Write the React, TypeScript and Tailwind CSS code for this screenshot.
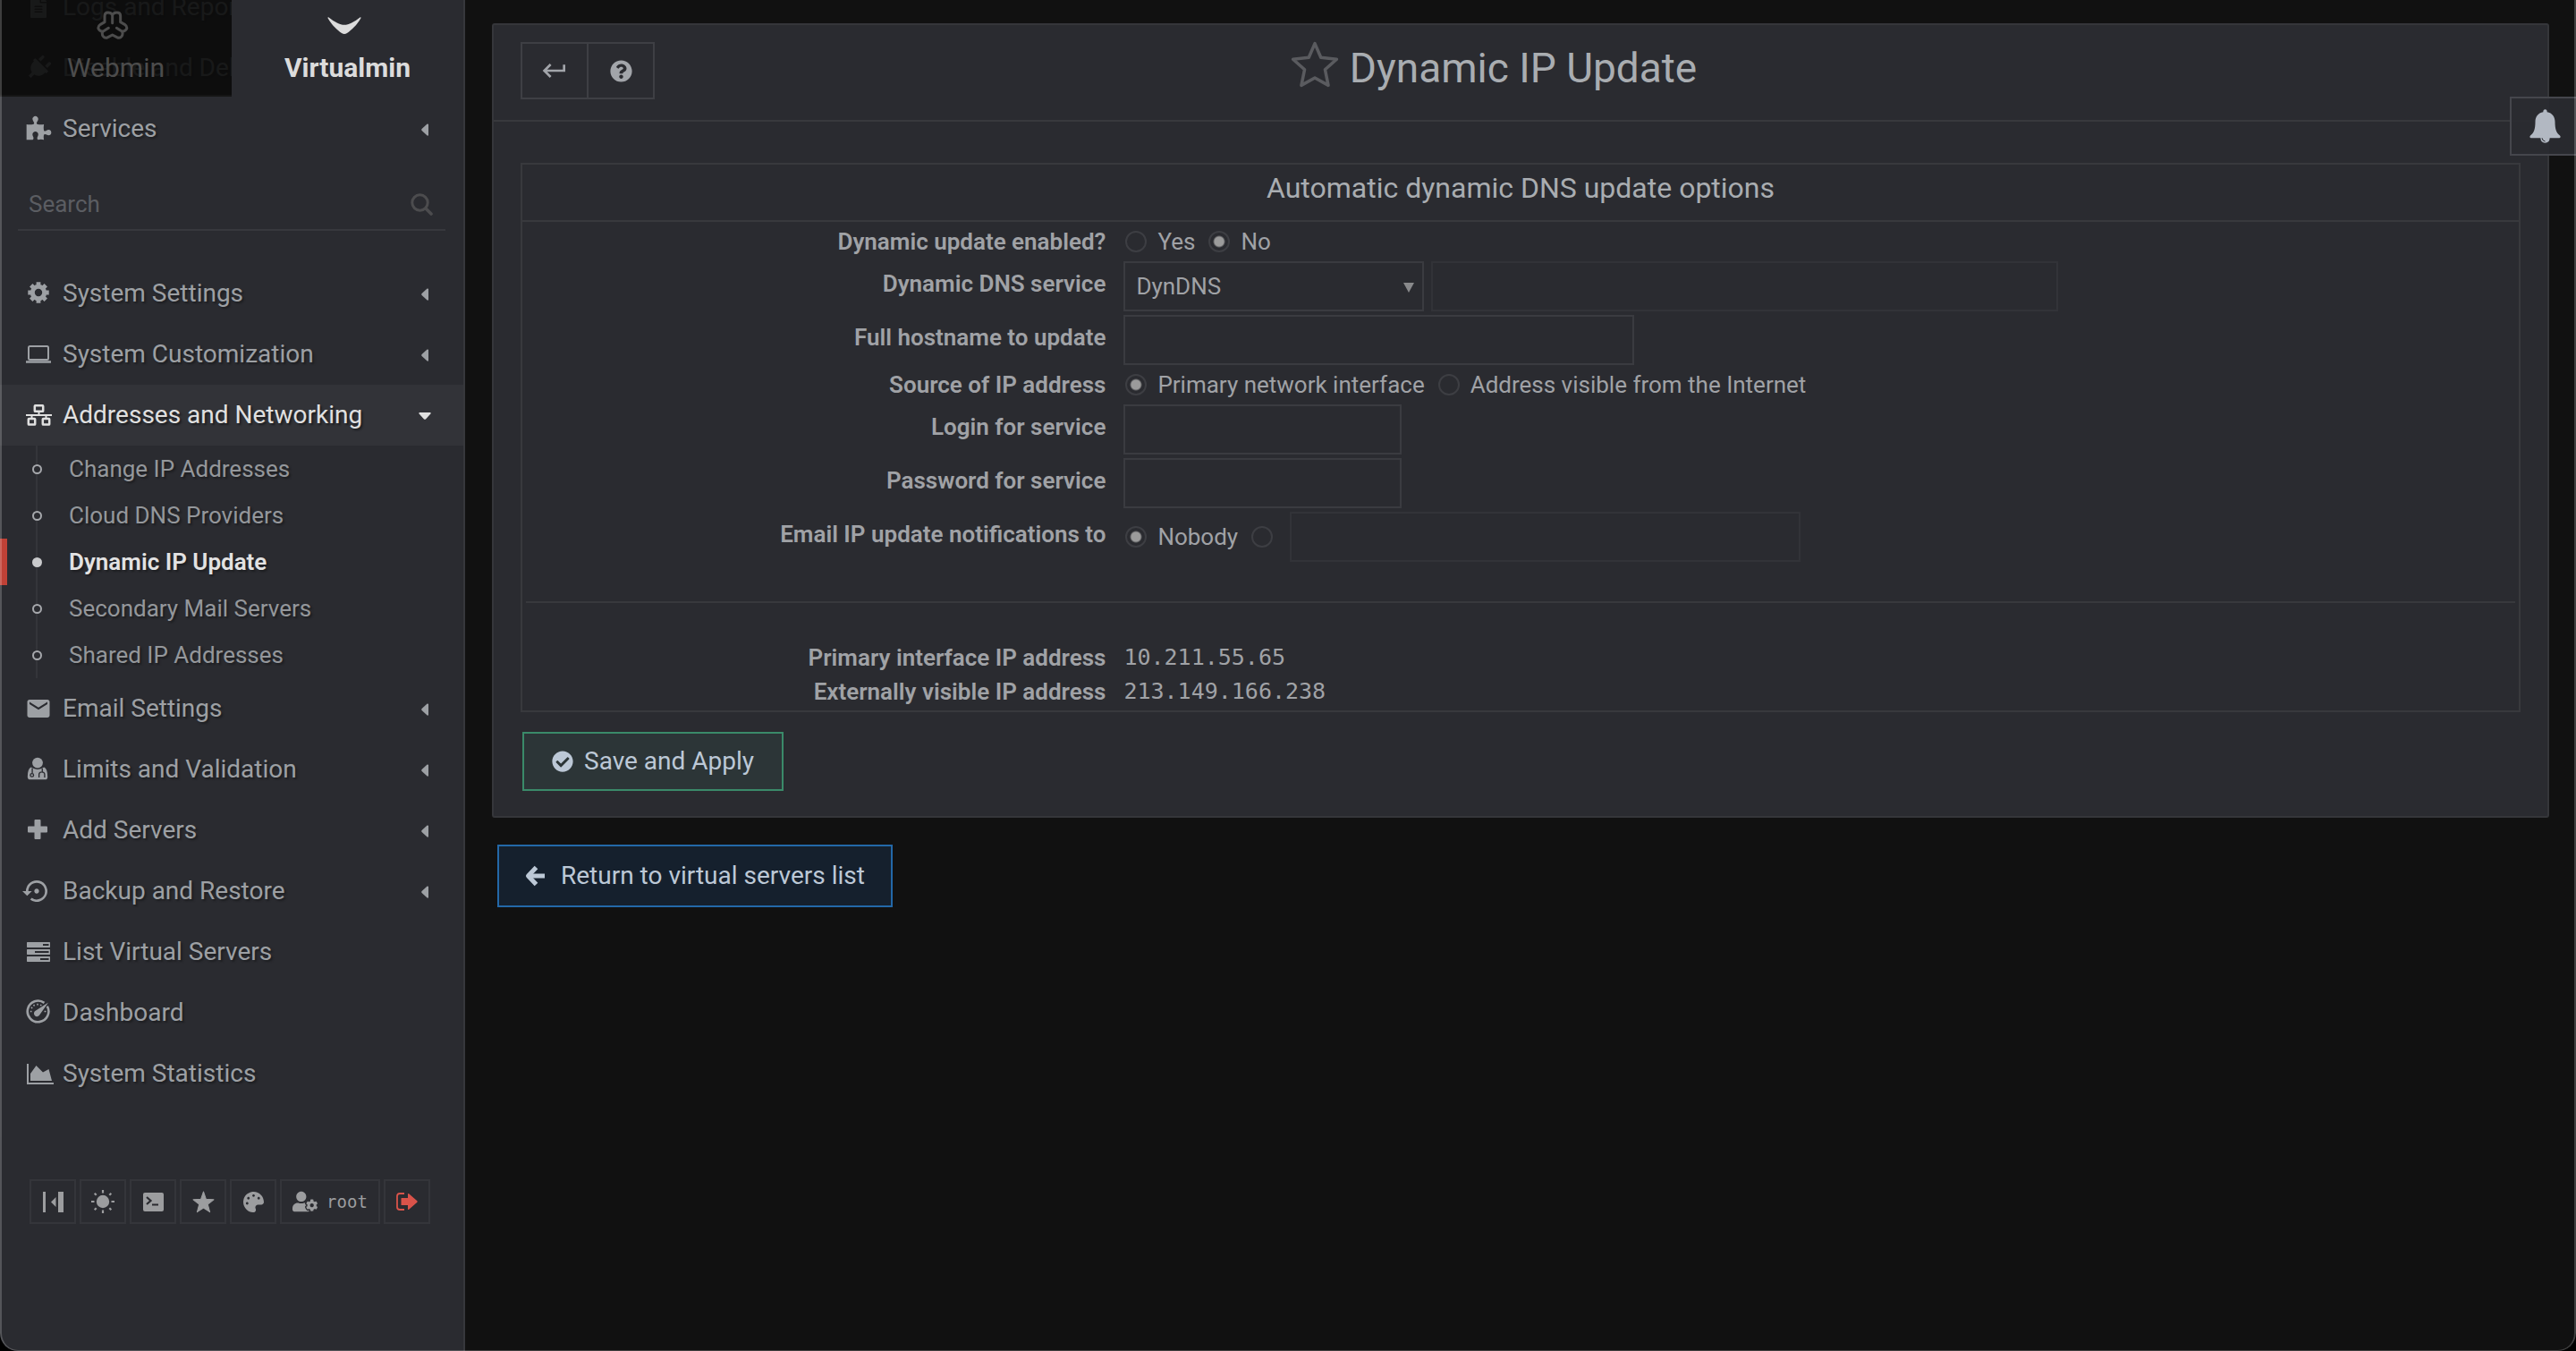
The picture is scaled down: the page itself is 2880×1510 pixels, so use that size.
import type { ReactNode } from "react";
import {
  FaCheckCircle,
  FaFileAlt,
  FaPalette,
  FaPlug,
  FaQuestionCircle,
  FaUserCog,
} from "react-icons/fa";
import { MdEmail, MdKeyboardReturn, MdSettingsBackupRestore } from "react-icons/md";

function WebminLogo() {
  return (
    <svg className="h-[33px] w-[36px]" viewBox="318 33 108 99" fill="none" stroke="currentColor" strokeWidth="9" strokeLinecap="round" strokeLinejoin="round">
      <path d="M345 71V50Q345 39 357 39Q366 39 371 46Q376 39 386 39Q398 39 398 50V71L412 79Q421 85 419 93Q416 101 404 103Q407 112 402 119Q396 127 386 122L371 114L356 122Q346 127 340 119Q335 112 338 103Q327 101 324 93Q322 85 331 79Z" />
      <path d="M371 48V74M358 91L339 103M385 91L404 103" />
    </svg>
  );
}

function VirtualminLogo() {
  return (
    <svg className="h-[33px] w-[38px]" viewBox="0 0 38 33" fill="currentColor">
      <path d="M.5 7.500Q1 7 1.600 7.400C8 12.500 14 15.500 19 15.800C24 15.500 30 12.500 36.400 7.400Q37 7 37.500 7.500Q37.700 8 37.300 8.600C33 16 27 22 22 25Q19 27 16 25C11 22 5 16 .7 8.600Q.3 8 .5 7.500Z" />
    </svg>
  );
}

function PuzzleIcon() {
  return (
    <svg className="h-[28px] w-[29px] -translate-y-px" viewBox="85 379 88 84" fill="currentColor">
      <path d="M87 409Q100 411 111 408Q115 405 110 398Q105 390 109 385Q117 377 125 385Q129 391 124 398Q119 405 123 408Q134 411 146 409Q144 421 146 430Q149 434 155 429Q163 424 169 430Q173 437 169 443Q163 449 155 444Q149 440 146 444Q144 452 146 461Q136 459 126 461Q121 457 125 450Q129 441 124 436Q117 430 110 436Q105 441 109 450Q113 457 108 461H87Z" />
    </svg>
  );
}

function DoctorIcon() {
  return (
    <svg className="h-[26px] w-[24px] -translate-x-px -translate-y-px" viewBox="85 256 72 79" fill="currentColor">
      <circle cx="121" cy="276" r="18" />
      <path d="M99 291Q87 296 87 324Q88 333 96 333H146Q155 333 155 324Q155 296 143 291Q121 306 99 291Z" />
      <g fill="none" stroke="#2a2b30" strokeWidth="4">
        <path d="M103 294V311M137 295V306M126 326V316Q126 307 135 307Q145 307 145 316V326" />
        <circle cx="102" cy="318" r="5.500" />
      </g>
    </svg>
  );
}

function PlusIcon() {
  return (
    <svg className="h-[22px] w-[22px] -translate-x-px -translate-y-px" viewBox="0 0 22 22" fill="currentColor">
      <path d="M8.500 0H13.500Q14.500 0 14.500 1V7.500H21Q22 7.500 22 8.500V13.500Q22 14.500 21 14.500H14.500V21Q14.500 22 13.500 22H8.500Q7.500 22 7.500 21V14.500H1Q0 14.500 0 13.500V8.500Q0 7.500 1 7.500H7.500V1Q7.500 0 8.500 0Z" />
    </svg>
  );
}

function GearIcon() {
  const angles = [0, 45, 90, 135];
  return (
    <svg className="h-[24px] w-[24px] -translate-y-px" viewBox="0 0 24 24" fill="none" stroke="currentColor">
      <circle cx="12" cy="12" r="6.700" strokeWidth="5" />
      {angles.map((a) => (
        <g key={a} transform={`rotate(${a} 12 12)`}>
          <path d="M12 0.300V5M12 19V23.700" strokeWidth="4.800" />
        </g>
      ))}
    </svg>
  );
}

function LaptopIcon() {
  return (
    <svg className="h-[20px] w-[28px]" viewBox="0 0 28 20" fill="none" stroke="currentColor">
      <rect x="3" y="1" width="22" height="15" rx="1.500" strokeWidth="2" />
      <path d="M0 18.500H28" strokeWidth="2.500" />
    </svg>
  );
}

function NetworkIcon() {
  return (
    <svg className="h-[24px] w-[29px]" viewBox="0 0 29 24" fill="none" stroke="currentColor">
      <rect x="9.800" y="1.300" width="9.400" height="6.500" rx="0.600" strokeWidth="2.500" />
      <rect x="2.800" y="16" width="7.400" height="6.500" rx="0.600" strokeWidth="2.500" />
      <rect x="18.800" y="16" width="7.400" height="6.500" rx="0.600" strokeWidth="2.500" />
      <path d="M0 12H29M14.500 8V12M6.500 12V16M22.500 12V16" strokeWidth="2" />
    </svg>
  );
}

function ServersIcon() {
  return (
    <svg className="h-[22px] w-[26px]" viewBox="0 0 26 22" fill="currentColor" fillRule="evenodd">
      <path d="M0.500 0H25.500L26 .5V5.500L25.500 6H0.500L0 5.500V.5ZM18 2V4H24.500V2Z" />
      <path d="M0.500 8H25.500L26 8.500V13.500L25.500 14H0.500L0 13.500V8.500ZM9 10V12H24.500V10Z" />
      <path d="M0.500 16H25.500L26 16.500V21.500L25.500 22H0.500L0 21.500V16.500ZM15 18V20H24.500V18Z" />
    </svg>
  );
}

function GaugeIcon() {
  return (
    <svg className="h-[27px] w-[27px] -translate-x-px -translate-y-[2px]" viewBox="0 0 27 27" fill="none" stroke="currentColor">
      <path d="M20.500 3.900A11.800 11.800 0 1 0 23.800 7.600" strokeWidth="2.600" />
      <path d="M25 3.500L15.500 17A3.400 3.400 0 1 1 11 12.600L25 3.500Z" fill="currentColor" stroke="none" />
      <path d="M13 4.800V6.600M8.700 5.900L9.400 7.500M5.800 9L7.300 9.900M4.800 13.500H6.500M20.500 13.500H22.500M17 5.800L16.400 7.200" strokeWidth="1.600" />
    </svg>
  );
}

function AreaChartIcon() {
  return (
    <svg className="h-[23px] w-[30px] translate-x-[2px]" viewBox="0 0 30 23" fill="currentColor">
      <path d="M0 0H2V21H30V23H0Z" />
      <path d="M4 19V11L10.500 2L18 9.500L24.500 6L28 19Z" />
    </svg>
  );
}

function SearchIcon() {
  return (
    <svg className="h-[25px] w-[25px] shrink-0 text-[#4c4c4e]" viewBox="0 0 25 25" fill="none" stroke="currentColor" strokeWidth="3" strokeLinecap="round">
      <circle cx="10.500" cy="10.500" r="8.700" />
      <path d="M17 17L23 23" strokeWidth="3.600" />
    </svg>
  );
}

function Caret({ open = false }: { open?: boolean }) {
  return open ? (
    <svg className="h-[8px] w-[14px]" viewBox="0 0 14 8" fill="currentColor">
      <path d="M1 0H13Q14 .4 13.400 1.400L8 7.400Q7 8.200 6 7.400L.6 1.400Q0 .4 1 0Z" />
    </svg>
  ) : (
    <svg className="h-[14px] w-[8px]" viewBox="0 0 8 14" fill="currentColor">
      <path d="M8 1V13Q7.600 14 6.600 13.400L.6 8Q-.2 7 .6 6L6.600 .6Q7.600 0 8 1Z" />
    </svg>
  );
}

function CollapseIcon() {
  return (
    <svg className="h-[23px] w-[23px]" viewBox="0 0 23 23" fill="currentColor">
      <path d="M0 0H3V23H0ZM17 0H23V23H17ZM14.500 6V17L9 11.500Z" />
    </svg>
  );
}

function SunIcon() {
  return (
    <svg className="h-[26px] w-[26px]" viewBox="0 0 26 26" fill="currentColor">
      <circle cx="13" cy="13" r="7.200" />
      <path d="M13 0V3.500M13 22.500V26M0 13H3.500M22.500 13H26M3.700 3.700L5.700 5.700M20.300 20.300L22.300 22.300M22.300 3.700L20.300 5.700M5.700 20.300L3.700 22.300" stroke="currentColor" strokeWidth="2.200" />
    </svg>
  );
}

function TerminalIcon() {
  return (
    <svg className="h-[21px] w-[23px]" viewBox="0 0 23 21">
      <rect width="23" height="21" rx="2" fill="currentColor" />
      <path d="M4 5L8.500 9L4 13M10 13.500H17" fill="none" stroke="#2a2b30" strokeWidth="2.200" />
    </svg>
  );
}

function StarIcon() {
  return (
    <svg className="h-[25px] w-[25px]" viewBox="0 0 24 24" fill="currentColor" stroke="currentColor" strokeLinejoin="round">
      <path d="M12 1L14.800 9L23 9.400L16.600 14.500L18.800 22.700L12 18.200L5.200 22.700L7.400 14.500L1 9.400L9.200 9Z" />
    </svg>
  );
}

function StarOutlineIcon() {
  return (
    <svg className="h-[54px] w-[54px]" viewBox="0 0 52 52" fill="none" stroke="currentColor" strokeWidth="3.400" strokeLinejoin="round">
      <path d="M26 3.500L32.500 18.600L49.500 20.500L37 31.500L40.500 48.500L26 40.500L11.500 48.500L15 31.500L2.500 20.500L19.500 18.600Z" />
    </svg>
  );
}

function LogoutIcon() {
  return (
    <svg className="h-[20px] w-[24px]" viewBox="0 0 24 20" fill="currentColor">
      <path d="M9 1H4Q1 1 1 4V16Q1 19 4 19H9" fill="none" stroke="currentColor" strokeWidth="1.800" />
      <path d="M6 6H13V1.500Q13.300 .5 14.200 1.200L23.400 9.300Q24 10 23.400 10.700L14.200 18.800Q13.300 19.500 13 18.500V14H6Q5.500 14 5.500 13.500V6.500Q5.500 6 6 6Z" />
    </svg>
  );
}

function ArrowLeftIcon() {
  return (
    <svg className="h-[24px] w-[22px]" viewBox="0 0 22 24" fill="none" stroke="currentColor" strokeWidth="5" strokeLinejoin="round">
      <path d="M12.500 2.500L3.500 12L12.500 21.500" />
      <path d="M4 12H22" />
    </svg>
  );
}

function BellIcon() {
  return (
    <svg className="h-[38px] w-[35px]" viewBox="0 0 35 38" fill="currentColor">
      <path d="M15.300 3.200Q15.300 .3 17.500 .3Q19.700 .3 19.700 3.200C25.500 4.200 28.500 8.500 28.500 14C28.500 22 30 26.500 34 29.600Q35.500 31.300 33.500 32.300H22.700Q22.300 37.700 17.500 37.700Q12.700 37.700 12.300 32.300H1.500Q-.5 31.300 1 29.600C5 26.500 6.500 22 6.500 14C6.500 8.500 9.500 4.200 15.300 3.200Z" />
      <path d="M14 32.300Q14.500 35.500 17.500 36" fill="none" stroke="#2a2b30" strokeWidth="1" />
    </svg>
  );
}

type Item = { label: string; icon: ReactNode; menu?: boolean; active?: boolean };

const above: Item[] = [
  { label: "Logs and Reports", icon: <FaFileAlt className="size-6" />, menu: true },
  { label: "Disable and Delete", icon: <FaPlug className="size-7 rotate-45" />, menu: true },
  { label: "Services", icon: <PuzzleIcon />, menu: true },
];

const upper: Item[] = [
  { label: "System Settings", icon: <GearIcon />, menu: true },
  { label: "System Customization", icon: <LaptopIcon />, menu: true },
  { label: "Addresses and Networking", icon: <NetworkIcon />, menu: true, active: true },
];

const subItems = [
  "Change IP Addresses",
  "Cloud DNS Providers",
  "Dynamic IP Update",
  "Secondary Mail Servers",
  "Shared IP Addresses",
];

const lower: Item[] = [
  { label: "Email Settings", icon: <MdEmail className="size-[30px]" />, menu: true },
  { label: "Limits and Validation", icon: <DoctorIcon />, menu: true },
  { label: "Add Servers", icon: <PlusIcon />, menu: true },
  { label: "Backup and Restore", icon: <MdSettingsBackupRestore className="size-[32px] shrink-0 -translate-x-[2px]" />, menu: true },
  { label: "List Virtual Servers", icon: <ServersIcon /> },
  { label: "Dashboard", icon: <GaugeIcon /> },
  { label: "System Statistics", icon: <AreaChartIcon /> },
];

function MenuRow({ item }: { item: Item }) {
  return (
    <li>
      <a
        href="#"
        className={
          item.active
            ? "flex h-[68px] items-center bg-[#323338] pr-[35px] pl-7 text-[28px] text-[#e0e0e0]"
            : "flex h-[68px] items-center pr-[35px] pl-7 text-[28px] text-[#9da0a4]"
        }
      >
        <span className="mr-3 flex w-[30px] justify-center">{item.icon}</span>
        <span className="flex-1 whitespace-nowrap">{item.label}</span>
        {item.menu && (
          <span className="flex w-4 justify-center pt-[2px]">
            <Caret open={item.active} />
          </span>
        )}
      </a>
    </li>
  );
}

function Sidebar() {
  const tool = "flex h-[50px] w-[52px] items-center justify-center border-2 border-[#34353a]";
  return (
    <aside className="relative w-[520px] shrink-0 overflow-hidden border-r-2 border-[#37383c] bg-[#2a2b30] [text-shadow:2px_2px_2px_#1d1e21]">
      <ul className="-mt-[26px]">
        {above.map((i) => (
          <MenuRow key={i.label} item={i} />
        ))}
      </ul>

      <div className="absolute inset-x-0 top-0 grid h-[108px] grid-cols-2 text-[30px] leading-9 [text-shadow:none]">
        <a href="#" className="flex flex-col items-center gap-[13px] border-b-2 border-[#151515] bg-[#0a0a0a]/90 pt-3 text-[#4c4c4c]">
          <span className="mr-2"><WebminLogo /></span>
          Webmin
        </a>
        <a href="#" className="flex flex-col items-center gap-[13px] bg-[#2a2b30] pt-3 font-bold text-[#dcdcdc]">
          <span className="mr-2"><VirtualminLogo /></span>
          Virtualmin
        </a>
      </div>

      <label className="mx-5 mt-[22px] mb-9 flex h-[58px] items-center border-b-2 border-[#37383d] pr-[14px] pl-3">
        <input
          type="search"
          aria-label="Search"
          placeholder="Search"
          className="min-w-0 flex-1 bg-transparent text-[26px] outline-none placeholder:text-[#5b5d62]"
        />
        <SearchIcon />
      </label>

      <ul>
        {upper.map((i) => (
          <MenuRow key={i.label} item={i} />
        ))}
      </ul>
      <ul className="relative before:absolute before:inset-y-0 before:left-[40px] before:w-[2px] before:bg-[#34353a]">
        {subItems.map((label) => {
          const current = label === "Dynamic IP Update";
          return (
            <li key={label}>
              <a
                href="#"
                className={
                  current
                    ? "relative flex h-[52px] items-center border-l-8 border-[#bf4136] pl-7 text-[26px] font-semibold text-[#e2e2e2]"
                    : "relative flex h-[52px] items-center border-l-8 border-transparent pl-7 text-[26px] text-[#94979b]"
                }
              >
                <span
                  className={
                    current
                      ? "mr-[30px] size-[11px] rounded-full bg-[#c9cacc]"
                      : "mr-[30px] size-[11px] rounded-full border-2 border-[#a6a8ac] bg-[#2a2b30]"
                  }
                />
                {label}
              </a>
            </li>
          );
        })}
      </ul>
      <ul>
        {lower.map((i) => (
          <MenuRow key={i.label} item={i} />
        ))}
      </ul>

      <div className="mt-[84px] mb-20 ml-[33px] flex gap-1 text-[#9c9d9f]">
        <button type="button" aria-label="Collapse navigation" className={tool}><CollapseIcon /></button>
        <button type="button" aria-label="Toggle light mode" className={tool}><SunIcon /></button>
        <button type="button" aria-label="Terminal" className={tool}><TerminalIcon /></button>
        <button type="button" aria-label="Favorites" className={tool}><StarIcon /></button>
        <button type="button" aria-label="Theme configuration" className={tool}><FaPalette className="size-[23px]" /></button>
        <button type="button" className="flex h-[50px] w-[112px] items-center justify-center gap-[10px] border-2 border-[#34353a] font-['DejaVu_Sans_Mono',monospace] text-[19px]">
          <FaUserCog className="size-7" />
          root
        </button>
        <button type="button" aria-label="Log out" className="flex h-[50px] w-[52px] items-center justify-center border-2 border-[#34353a] text-[#d9534a]"><LogoutIcon /></button>
      </div>
    </aside>
  );
}

function Row({ label, htmlFor, tall = false, children }: { label: string; htmlFor?: string; tall?: boolean; children: ReactNode }) {
  const cls = tall
    ? "pt-2 pr-[18px] text-right leading-[38px] font-semibold"
    : "pr-[18px] text-right leading-10 font-semibold";
  return (
    <div className={tall ? "grid h-[60px] grid-cols-[30%_1fr]" : "grid h-10 grid-cols-[30%_1fr]"}>
      {htmlFor ? <label htmlFor={htmlFor} className={cls}>{label}</label> : <span className={cls}>{label}</span>}
      <div className="flex items-center pl-[2px]">{children}</div>
    </div>
  );
}

function Radio({ name, label, checked = false }: { name: string; label?: string; checked?: boolean }) {
  return (
    <label className="mr-[13px] ml-[2px] flex items-center gap-3">
      <input
        type="radio"
        name={name}
        defaultChecked={checked}
        aria-label={label ?? "Email address"}
        className="size-6 appearance-none rounded-full border-2 border-[#3d3e43] checked:bg-[radial-gradient(circle,#9b9b9b_5px,transparent_7px)]"
      />
      {label}
    </label>
  );
}

const field = "h-14 border-2 border-[#3a3b40] bg-transparent px-3 outline-none";
const mutedField = "h-14 border-2 border-[#323338] bg-transparent px-3 outline-none";

function Main() {
  return (
    <main className="min-w-0 flex-1 px-[30px] pt-[26px] text-[26px] text-[#a0a2a6]">
      <section className="rounded-[3px] border-2 border-[#35363a] bg-[#2a2b30]">
        <header className="grid h-[108px] grid-cols-[1fr_auto_1fr] border-b-2 border-[#38393d] px-[30px]">
          <div className="mt-[19px] flex h-16 text-[#a2a5aa]">
            <button type="button" aria-label="Back" className="flex w-[76px] items-center justify-center border-2 border-[#3e3f44]">
              <MdKeyboardReturn className="size-8" />
            </button>
            <button type="button" aria-label="Help" className="-ml-[2px] flex w-[76px] items-center justify-center border-2 border-[#3e3f44]">
              <FaQuestionCircle className="size-[25px]" />
            </button>
          </div>
          <h1 className="flex h-24 items-center gap-3 pr-[60px] text-[46px] text-[#a9adb1]">
            <button type="button" aria-label="Add to favorites" className="pb-2 text-[#5a5b5f]">
              <StarOutlineIcon />
            </button>
            Dynamic IP Update
          </h1>
        </header>

        <form className="px-[30px] pt-[46px] pb-7" onSubmit={(e) => e.preventDefault()}>
          <div className="border-2 border-[#38393d]">
            <h2 className="border-b-2 border-[#38393d] pt-[6px] pb-4 text-center text-[32px] leading-10 text-[#a9adb1]">
              Automatic dynamic DNS update options
            </h2>
            <div className="p-[2px]">
              <Row label="Dynamic update enabled?">
                <Radio name="enabled" label="Yes" />
                <Radio name="enabled" label="No" checked />
              </Row>
              <Row label="Dynamic DNS service" htmlFor="service" tall>
                <span className="relative mr-2 w-[336px]">
                  <select id="service" className="h-14 w-full appearance-none border-2 border-[#3a3b40] bg-transparent px-3 outline-none">
                    <option>DynDNS</option>
                  </select>
                  <svg className="pointer-events-none absolute top-6 right-[11px] h-[11px] w-3" viewBox="0 0 12 11" fill="#88898b">
                    <path d="M0 0H12L6 11Z" />
                  </svg>
                </span>
                <input aria-label="Custom service" disabled className={`${mutedField} w-[701px]`} />
              </Row>
              <Row label="Full hostname to update" htmlFor="hostname" tall>
                <input id="hostname" className={`${field} w-[571px]`} />
              </Row>
              <Row label="Source of IP address">
                <Radio name="source" label="Primary network interface" checked />
                <Radio name="source" label="Address visible from the Internet" />
              </Row>
              <Row label="Login for service" htmlFor="login" tall>
                <input id="login" className={`${field} w-[311px]`} />
              </Row>
              <Row label="Password for service" htmlFor="password" tall>
                <input id="password" type="password" className={`${field} w-[311px]`} />
              </Row>
              <Row label="Email IP update notifications to" tall>
                <Radio name="email" label="Nobody" checked />
                <Radio name="email" />
                <input aria-label="Notification address" disabled className={`${mutedField} ml-[6px] w-[571px]`} />
              </Row>
              <hr className="mx-[2px] my-[42px] border-t-2 border-[#38393d]" />
              <dl className="grid grid-cols-[30%_1fr] leading-[38px]">
                <dt className="pr-[18px] text-right font-semibold">Primary interface IP address</dt>
                <dd className="pl-[2px] font-['DejaVu_Sans_Mono',monospace] text-[25px]">10.211.55.65</dd>
                <dt className="pr-[18px] text-right font-semibold">Externally visible IP address</dt>
                <dd className="pl-[2px] font-['DejaVu_Sans_Mono',monospace] text-[25px]">213.149.166.238</dd>
              </dl>
            </div>
          </div>
          <button type="submit" className="mt-[22px] ml-[2px] flex h-[66px] items-center gap-3 border-2 border-[#3a8a69] bg-[#2c3537] px-[31px] text-[28px] text-[#bcc8d6]">
            <FaCheckCircle className="size-6" />
            Save and Apply
          </button>
        </form>
      </section>

      <a href="#" className="mt-[30px] ml-[6px] flex h-[70px] w-fit items-center gap-[18px] border-2 border-[#2368a8] bg-[#15202d] px-[29px] text-[28px] text-[#bcc8d6]">
        <ArrowLeftIcon />
        Return to virtual servers list
      </a>
    </main>
  );
}

export default function App() {
  return (
    <div className="bg-black">
      <div className="relative flex min-h-screen overflow-hidden rounded-b-[20px] bg-[#111111] font-[Roboto,sans-serif]">
        <Sidebar />
        <Main />
        <button
          type="button"
          aria-label="Notifications"
          className="absolute top-[108px] right-0 flex h-[66px] w-[74px] items-center justify-center border-2 border-r-0 border-[#45464c] bg-[#2a2b30]/95 pl-[2px] text-[#b2b8c2]"
        >
          <BellIcon />
        </button>
        <div className="pointer-events-none absolute inset-0 rounded-b-[20px] border-x-2 border-b border-white/20" />
      </div>
    </div>
  );
}
